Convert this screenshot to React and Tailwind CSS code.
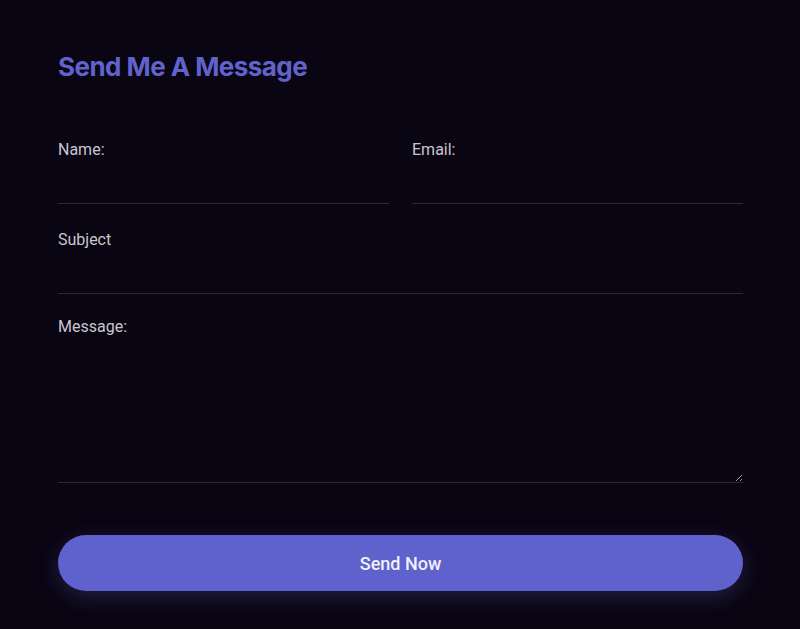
const Field = ({ label, className = "" }) => (
  <label className={`flex flex-col ${className}`}>
    <span className="text-[16px] leading-6 text-[#c9c5cf]">{label}</span>
    <input
      type="text"
      className="h-[42px] w-full border-b border-[#2c2836] bg-transparent text-[#e5e3ea] outline-none"
    />
  </label>
);

export default function App() {
  return (
    <div
      className="min-h-[629px] w-full bg-[#0a0512] px-[58px] pt-[50px]"
      style={{ fontFamily: "Roboto, 'Liberation Sans', sans-serif" }}
    >
      <form className="w-[685px]" onSubmit={(e) => e.preventDefault()}>
        <h2 className="font-['Inter',sans-serif] text-[26px] font-bold leading-[34px] tracking-[-0.55px] text-[#6163cd]">
          Send Me A Message
        </h2>

        <div className="mt-[54px] grid grid-cols-2 gap-x-[23px]">
          <Field label="Name:" />
          <Field label="Email:" />
        </div>

        <Field label="Subject" className="mt-[24px]" />

        <label className="mt-[21px] flex flex-col">
          <span className="text-[16px] leading-6 text-[#c9c5cf]">Message:</span>
          <textarea className="h-[144px] w-full border-b border-[#2c2836] bg-transparent text-[#e5e3ea] outline-none" />
        </label>

        <button
          type="submit"
          className="mt-[52px] h-[56px] w-full rounded-full bg-[#5f61cc] text-[18px] font-medium text-[#f1f0fb] shadow-[0_6px_22px_rgba(95,97,204,0.28)]"
        >
          Send Now
        </button>
      </form>
    </div>
  );
}
